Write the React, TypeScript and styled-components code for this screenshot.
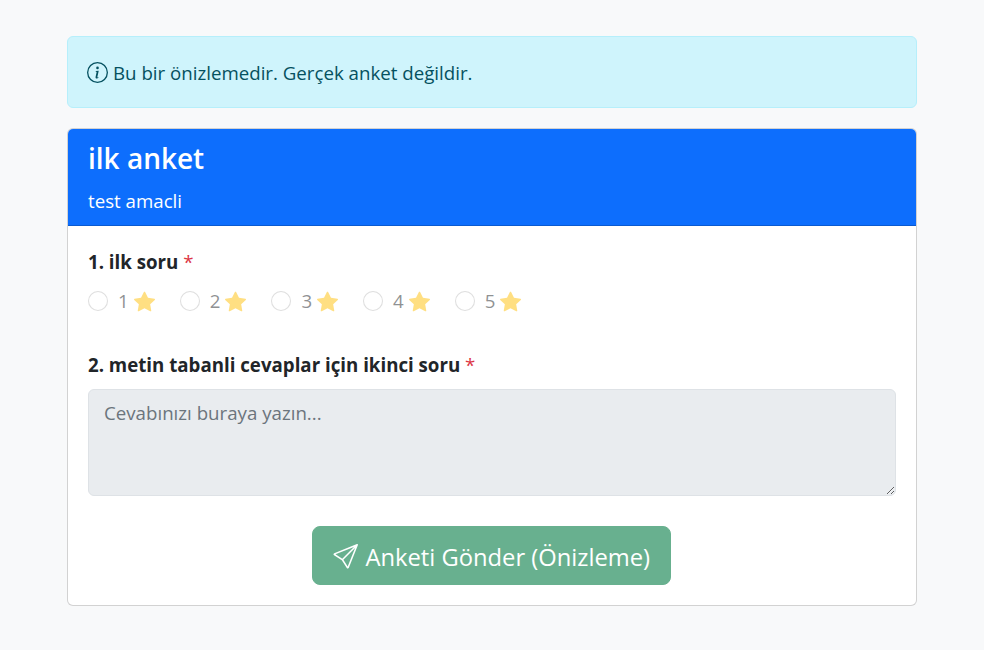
import { createGlobalStyle } from "styled-components";
import styled from "styled-components";
import { BsInfoCircle, BsSend, BsStarFill } from "react-icons/bs";

const GlobalStyle = createGlobalStyle`
  * {
    box-sizing: border-box;
  }

  body {
    margin: 0;
    background: #f8f9fa;
    color: #212529;
    font-family: "Open Sans", "Noto Sans", sans-serif;
    font-size: 18.7px;
    line-height: 28px;
  }
`;

const ratings = [1, 2, 3, 4, 5];

export default function App() {
  return (
    <>
      <GlobalStyle />
      <Container>
        <Alert>
          <BsInfoCircle size={21} />
          <span>Bu bir önizlemedir. Gerçek anket değildir.</span>
        </Alert>

        <Card>
          <CardHeader>
            <Title>ilk anket</Title>
            <Subtitle>test amacli</Subtitle>
          </CardHeader>

          <CardBody>
            <Question>
              <QuestionLabel>
                1. ilk soru <Required>*</Required>
              </QuestionLabel>
              <RatingRow>
                {ratings.map((value) => (
                  <RatingOption key={value}>
                    <Radio type="radio" name="q1" disabled />
                    <span>{value}</span>
                    <BsStarFill size={21} color="#ffc107" />
                  </RatingOption>
                ))}
              </RatingRow>
            </Question>

            <Question>
              <QuestionLabel>
                2. metin tabanli cevaplar için ikinci soru <Required>*</Required>
              </QuestionLabel>
              <Answer placeholder="Cevabınızı buraya yazın..." disabled />
            </Question>

            <Actions>
              <SubmitButton type="button" disabled>
                <BsSend size={25} />
                Anketi Gönder (Önizleme)
              </SubmitButton>
            </Actions>
          </CardBody>
        </Card>
      </Container>
    </>
  );
}

const Container = styled.div`
  width: 850px;
  margin: 0 auto;
  padding: 36px 0 44px;
`;

const Alert = styled.div`
  display: flex;
  align-items: center;
  gap: 5px;
  height: 72px;
  padding: 1px 19px 0;
  margin-bottom: 20px;
  background: #cff4fc;
  border: 1px solid #b6effb;
  border-radius: 6px;
  color: #055160;
`;

const Card = styled.div`
  background: #fff;
  border: 1px solid rgba(0, 0, 0, 0.176);
  border-radius: 6px;
  overflow: hidden;
`;

const CardHeader = styled.div`
  height: 97px;
  padding: 13px 20px 0;
  background: #0d6efd;
  color: #fff;
  border-bottom: 1px solid rgba(0, 0, 0, 0.176);
`;

const Title = styled.h3`
  margin: 0 0 11px;
  font-size: 28px;
  font-weight: 600;
  line-height: 1.2;
`;

const Subtitle = styled.p`
  margin: 0;
`;

const CardBody = styled.div`
  padding: 22px 20px 20px;
`;

const Question = styled.div`
  margin-bottom: 30px;
`;

const QuestionLabel = styled.div`
  margin-bottom: 10px;
  font-weight: 700;
  font-size: 18.7px;
`;

const Required = styled.span`
  color: #dc3545;
  font-weight: 400;
`;

const RatingRow = styled.div`
  display: flex;
  gap: 25px;
  margin-bottom: 35px;
`;

const RatingOption = styled.label`
  display: flex;
  align-items: center;
  gap: 5px;
  height: 30px;
  opacity: 0.5;
`;

const Radio = styled.input`
  appearance: none;
  width: 20px;
  height: 20px;
  margin: 0 5px 0 0;
  background: #fff;
  border: 1px solid rgba(0, 0, 0, 0.25);
  border-radius: 50%;
`;

const Answer = styled.textarea`
  display: block;
  width: 100%;
  height: 107px;
  padding: 9px 15px;
  background: #e9ecef;
  border: 1px solid #dee2e6;
  border-radius: 6px;
  color: #212529;
  font: inherit;
  resize: vertical;

  &::placeholder {
    color: #6c757d;
    opacity: 1;
  }
`;

const Actions = styled.div`
  display: flex;
  justify-content: center;
`;

const SubmitButton = styled.button`
  display: inline-flex;
  align-items: center;
  gap: 7px;
  height: 59px;
  padding: 2px 20px 0 20.5px;
  margin-right: 1px;
  background: #198754;
  border: 1px solid #198754;
  border-radius: 8px;
  color: #fff;
  font-family: inherit;
  font-size: 23.75px;
  opacity: 0.65;
`;
